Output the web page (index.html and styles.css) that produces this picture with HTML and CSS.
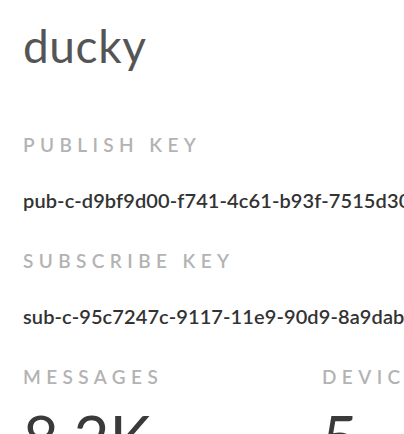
FILE: index.html
```html
<!DOCTYPE html>
<html>
<head>
<meta charset="utf-8">
<link rel="stylesheet" href="styles.css">
</head>
<body>
<div class="app">
  <h1 class="title">ducky</h1>
  <section class="field">
    <div class="label">PUBLISH KEY</div>
    <div class="key">pub-c-d9bf9d00-f741-4c61-b93f-7515d30a1b2c</div>
  </section>
  <section class="field">
    <div class="label">SUBSCRIBE KEY</div>
    <div class="key">sub-c-95c7247c-9117-11e9-90d9-8a9dab1c3f5e</div>
  </section>
  <div class="stats">
    <div class="stat">
      <div class="label">MESSAGES</div>
      <div class="value">8.2K</div>
    </div>
    <div class="stat">
      <div class="label">DEVICES</div>
      <div class="value">5</div>
    </div>
  </div>
</div>
</body>
</html>
```
FILE: styles.css
```css
html, body {
  margin: 0;
  padding: 0;
  background: #ffffff;
  overflow: hidden;
}
.app {
  font-family: Lato, "Open Sans", sans-serif;
  padding: 19px 0 0 23px;
  white-space: nowrap;
}
.title {
  margin: 0;
  font-size: 46px;
  font-weight: 400;
  letter-spacing: 0.6px;
  color: #555555;
  line-height: 54px;
}
.label {
  font-size: 19px;
  font-weight: 600;
  letter-spacing: 5.4px;
  color: #b3b3b3;
  line-height: 20px;
}
.title + .field .label {
  margin-top: 62px;
}
.key {
  margin-top: 35px;
  margin-bottom: 41px;
  font-size: 20px;
  font-weight: 600;
  letter-spacing: 0.1px;
  color: #333333;
  line-height: 20px;
}
.stats {
  display: flex;
}
.stat {
  width: 299px;
  flex: none;
}
.value {
  margin-top: 20px;
  font-size: 62px;
  color: #3a3a3a;
  line-height: 60px;
}
```
